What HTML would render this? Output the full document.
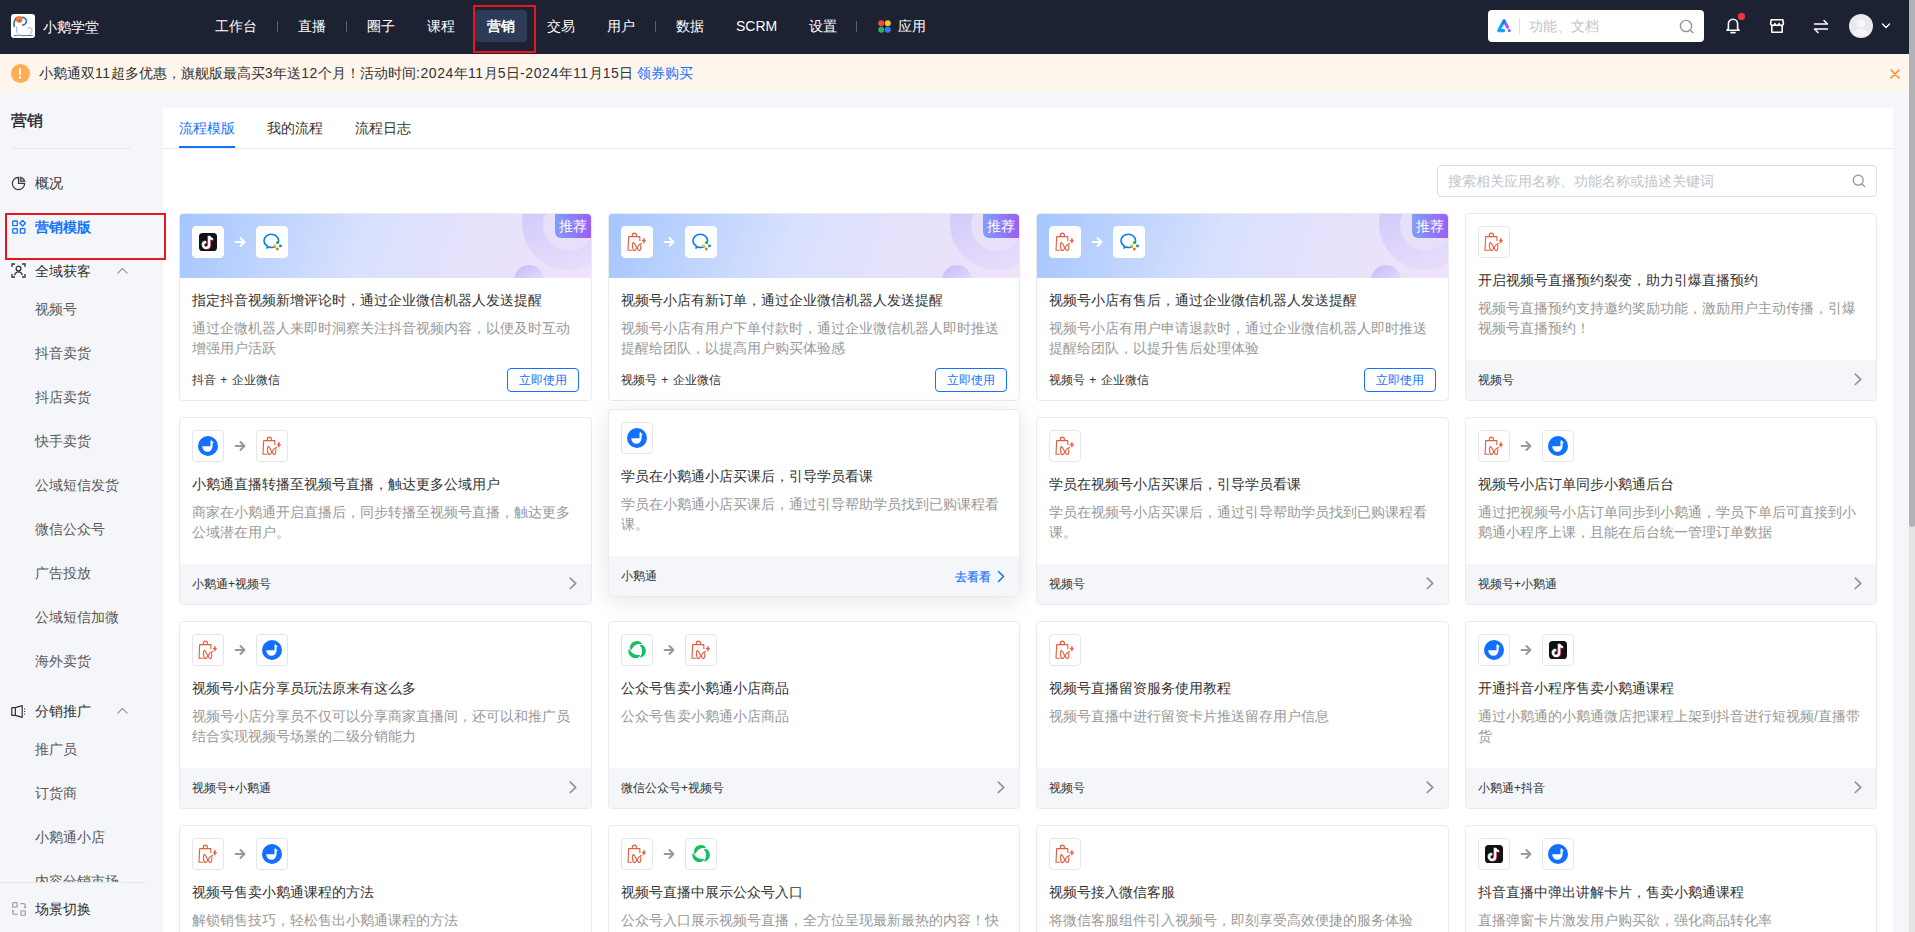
<!DOCTYPE html>
<html><head><meta charset="utf-8"><title>营销</title>
<style>
*{box-sizing:border-box}
html,body{margin:0;padding:0}
body{width:1915px;height:932px;overflow:hidden;position:relative;background:#f4f6fa;font-family:"Liberation Sans",sans-serif;color:#333;font-size:14px}
.top{position:absolute;left:0;top:0;width:1915px;height:54px;background:#1c2232}
.logo{position:absolute;left:11px;top:14px;width:24px;height:24px;border-radius:3px;background:#fff;overflow:hidden}
.brand{position:absolute;left:43px;top:17px;font-size:14px;line-height:20px;color:#fff;white-space:nowrap}
.nv{position:absolute;top:16px;font-size:14px;line-height:20px;color:#fff;white-space:nowrap}
.nv.act{font-weight:bold}
.actbg{position:absolute;left:475px;top:10px;width:52px;height:32px;border-radius:4px;background:#2c3b57}
.nsep{position:absolute;top:21px;width:1px;height:11px;background:#5a6070}
.redbox{position:absolute;border:2px solid #e3171d}
.sbox{position:absolute;left:1488px;top:10px;width:216px;height:32px;border-radius:4px;background:#fff}
.notice{position:absolute;left:0;top:54px;width:1915px;height:38px;background:#fef6ec}
.ntxt{position:absolute;left:39px;top:9px;font-size:14px;line-height:20px;color:#333;white-space:nowrap}
.dg{letter-spacing:.6px}
.ntxt a{color:#1472ff;text-decoration:none}
.side{position:absolute;left:0;top:92px;width:163px;height:840px}
.stitle{position:absolute;left:11px;top:18px;font-size:16px;line-height:22px;color:#1f2329;-webkit-text-stroke:.35px #1f2329}
.sdiv{position:absolute;left:11px;top:56px;width:120px;height:1px;background:#e5e7eb}
.si{position:absolute;left:35px;font-size:14px;line-height:20px;color:#595959;white-space:nowrap}
.sg{position:absolute;left:35px;font-size:14px;line-height:20px;color:#333;white-space:nowrap}
.panel{position:absolute;left:163px;top:108px;width:1730px;height:824px;background:#fff}
.tab{position:absolute;top:10px;font-size:14px;line-height:20px;color:#333;white-space:nowrap}
.tab.on{color:#1472ff}
.tabline{position:absolute;left:0;top:40px;width:1730px;height:1px;background:#ebedf0}
.tabul{position:absolute;left:16px;top:38px;width:56px;height:2px;background:#1472ff}
.search{position:absolute;left:1274px;top:57px;width:440px;height:32px;border:1px solid #dcdfe6;border-radius:4px}
.search span{position:absolute;left:10px;top:5px;font-size:14px;line-height:20px;color:#c0c4cc;white-space:nowrap}
.card{position:absolute;width:412px;height:188px;border:1px solid #ebebeb;border-radius:4px;background:#fff;overflow:hidden}
.card.hov{box-shadow:0 4px 24px rgba(0,0,0,.1)}
.hdr{position:absolute;left:0;top:0;right:0;height:64px;overflow:hidden;background:linear-gradient(110deg,#a4c6ff 0%,#d9e1fd 45%,#e6e1fb 70%,#efe3fa 100%)}
.ring{position:absolute;right:-25px;top:-38px;width:94px;height:94px;border-radius:50%;background:linear-gradient(160deg,rgba(196,186,252,.75) 10%,rgba(205,196,250,.45) 60%,rgba(220,210,250,.2) 100%)}
.ring::after{content:"";position:absolute;left:21px;top:23px;width:52px;height:52px;border-radius:50%;background:#e7e0fa}
.dot{position:absolute;right:47px;top:51px;width:30px;height:30px;border-radius:50%;background:linear-gradient(150deg,#cfc2fb 20%,rgba(235,225,250,0) 80%)}
.badge{position:absolute;right:0;top:0;width:36px;height:24px;border-radius:0 4px 0 6px;background:linear-gradient(90deg,#7f9ff8,#9b5ef6);color:#fff;font-size:14px;line-height:24px;text-align:center}
.icons{position:absolute;left:12px;top:12px;height:32px;display:flex;align-items:center}
.ib{width:32px;height:32px;border:1px solid #e6e6e6;border-radius:4px;background:#fff;display:flex;align-items:center;justify-content:center}
.ib.nb{border-color:#fff}
.ib svg{display:block}
.arr{width:32px;display:flex;align-items:center;justify-content:center}
.arr svg{display:block}
.ttl{position:absolute;left:12px;top:56px;font-size:14px;line-height:20px;color:#333;white-space:nowrap}
.desc{position:absolute;left:12px;top:84px;font-size:14px;line-height:20px;color:#999;white-space:nowrap}
.card .hdr ~ .ttl{top:76px}
.card .hdr ~ .desc{top:104px}
.ft{position:absolute;left:0;bottom:0;right:0;height:40px;background:#f5f6fa}
.ftt{position:absolute;left:12px;top:12px;font-size:12px;line-height:17px;color:#333;white-space:nowrap}
.chev{position:absolute;right:14px;top:13px}
.chev svg,.go svg{display:block}
.go svg{margin-top:-2px}
.go{position:absolute;right:14px;top:13px;font-size:12px;line-height:17px;color:#1472ff;display:flex;align-items:center;gap:6px;-webkit-text-stroke:.2px #1472ff}
.ftw{position:absolute;left:12px;top:158px;font-size:12px;line-height:17px;color:#333;white-space:nowrap;word-spacing:1px}
.btn{position:absolute;right:12px;top:154px;width:72px;height:24px;border:1px solid #1472ff;border-radius:4px;color:#1472ff;font-size:12px;line-height:22px;text-align:center}
.sbar{position:absolute;left:1909px;top:0;width:6px;height:932px;background:#e4e4e5}
.sthumb{position:absolute;left:1909px;top:0;width:6px;height:527px;background:#b1b2b5;border-radius:0 0 3px 3px}
</style></head><body>
<div class="top">
  <div class="logo"><svg width="24" height="24" viewBox="0 0 24 24"><path d="M3.2 12.2C2.6 9.6 3 6.5 5.6 3.6M11.5 3.2C13.6 3.8 15.4 5.2 15.4 7.5 15.4 9.5 13.2 11 11.6 11" fill="none" stroke="#2f6db0" stroke-width="1.6" stroke-linecap="round"/><circle cx="8.2" cy="5.4" r="3.3" fill="#f47a3a"/><circle cx="8.6" cy="7" r="1" fill="#a05a3a"/><path d="M5.8 12.5V18.8M16.6 14.4C18.4 13.2 21 13.6 21 16.4 20.8 18.2 19.8 19.6 18.6 20.8" fill="none" stroke="#7ea3c6" stroke-width=".9"/><path d="M3 21.6H21.8" stroke="#4d7aa0" stroke-width="1"/><rect x="5.4" y="19.8" width="4.6" height="1.6" fill="#f6d2c8"/></svg></div>
  <div class="brand">小鹅学堂</div>
  <div class="actbg"></div>
  <div class="nv" style="left:215px">工作台</div>
<div class="nv" style="left:298px">直播</div>
<div class="nv" style="left:367px">圈子</div>
<div class="nv" style="left:427px">课程</div>
<div class="nv act" style="left:487px">营销</div>
<div class="nv" style="left:547px">交易</div>
<div class="nv" style="left:607px">用户</div>
<div class="nv" style="left:676px">数据</div>
<div class="nv" style="left:736px">SCRM</div>
<div class="nv" style="left:809px">设置</div>
<div class="nv" style="left:898px">应用</div><div class="nsep" style="left:277px"></div><div class="nsep" style="left:346px"></div><div class="nsep" style="left:655px"></div><div class="nsep" style="left:856px"></div>
  <div class="redbox" style="left:473px;top:5px;width:63px;height:48px"></div>
  <div style="position:absolute;left:878px;top:20px;width:13px;height:13px">
    <svg width="13" height="13" viewBox="0 0 13 13"><circle cx="3.2" cy="3.2" r="3" fill="#f5483b"/><circle cx="9.8" cy="3.2" r="3" fill="#fbbf24"/><circle cx="3.2" cy="9.8" r="3" fill="#22b35e"/><circle cx="9.8" cy="9.8" r="3" fill="#2f7bf5"/></svg>
  </div>
  <div class="sbox">
    <svg style="position:absolute;left:0;top:0" width="32" height="32" viewBox="0 0 32 32"><defs><linearGradient id="lg1" x1="0" y1="1" x2="1" y2="0"><stop offset="0" stop-color="#06b6f8"/><stop offset="1" stop-color="#0a7cff"/></linearGradient></defs><path d="M19.6 17.2L16.2 11" stroke="#8e62ff" stroke-width="3.1" stroke-linecap="round" fill="none"/><path d="M16.1 10.8L10.6 20.6H15.6" stroke="url(#lg1)" stroke-width="3.1" stroke-linecap="round" stroke-linejoin="round" fill="none"/><circle cx="21.3" cy="20.6" r="1.6" fill="#8e5cff"/></svg>
    <div style="position:absolute;left:31px;top:8px;width:1px;height:16px;background:#dcdfe6"></div>
    <div style="position:absolute;left:41px;top:6px;font-size:14px;line-height:20px;color:#c0c4cc;white-space:nowrap">功能、文档</div>
    <svg style="position:absolute;left:191px;top:9px" width="16" height="15" viewBox="0 0 16 15" fill="none" stroke="#909399" stroke-width="1.4" stroke-linecap="round"><circle cx="7" cy="7" r="5.6"/><path d="M11.2 11.2L14 13.8"/></svg>
  </div>
  <svg style="position:absolute;left:1725px;top:17px" width="16" height="17" viewBox="0 0 16 17" fill="none" stroke="#fff" stroke-width="1.6" stroke-linejoin="round"><path d="M8 2.2a4.6 4.6 0 0 0-4.6 4.6v4.6L2 13.2h12l-1.4-1.8V6.8A4.6 4.6 0 0 0 8 2.2z"/><path d="M6 15.6h4" stroke-linecap="round"/></svg>
  <div style="position:absolute;left:1738px;top:13px;width:6.5px;height:6.5px;border-radius:50%;background:#f5353b"></div>
  <svg style="position:absolute;left:1769px;top:18px" width="16" height="16" viewBox="0 0 16 16" fill="none" stroke="#fff" stroke-width="1.6" stroke-linejoin="round"><path d="M2.2 1.8h11.6l.6 3.6c0 1.3-1 2-2.2 2-1.1 0-2.1-.8-2.1-1.9 0 1.1-1 1.9-2.1 1.9s-2.1-.8-2.1-1.9c0 1.1-1 1.9-2.1 1.9-1.2 0-2.2-.7-2.2-2z"/><path d="M2.8 8v6.2h10.4V8M2.4 14.2h11.2"/></svg>
  <svg style="position:absolute;left:1813px;top:19px" width="16" height="15" viewBox="0 0 16 15" fill="none" stroke="#fff" stroke-width="1.6" stroke-linecap="round" stroke-linejoin="round"><path d="M1.5 5h13L11 1.5M14.5 10h-13L5 13.5"/></svg>
  <div style="position:absolute;left:1849px;top:14px;width:24px;height:24px;border-radius:50%;background:#e9eaf0;overflow:hidden"><svg width="24" height="24" viewBox="0 0 24 24"><circle cx="12" cy="9.5" r="4.2" fill="#f7f7fa"/><path d="M4 22c1-5 4.5-7 8-7s7 2 8 7z" fill="#f7f7fa"/></svg></div>
  <svg style="position:absolute;left:1881px;top:22px" width="10" height="8" viewBox="0 0 10 8" fill="none" stroke="#fff" stroke-width="1.4" stroke-linecap="round" stroke-linejoin="round"><path d="M1.5 2l3.5 3.5L8.5 2"/></svg>
</div>
<div class="notice">
  <div style="position:absolute;left:11px;top:10px;width:19px;height:19px;border-radius:50%;background:#ffae52"><div style="position:absolute;left:8.3px;top:4px;width:2.2px;height:7px;background:#fff;border-radius:1px"></div><div style="position:absolute;left:8.3px;top:12.4px;width:2.2px;height:2.2px;background:#fff;border-radius:1px"></div></div>
  <div class="ntxt">小鹅通双<span class="dg">11</span>超多优惠，旗舰版最高买<span class="dg">3</span>年送<span class="dg">12</span>个月！活动时间<span class="dg">:2024</span>年<span class="dg">11</span>月<span class="dg">5</span>日<span class="dg">-2024</span>年<span class="dg">11</span>月<span class="dg">15</span>日 <a>领券购买</a></div>
  <svg style="position:absolute;left:1890px;top:15px" width="10" height="10" viewBox="0 0 10 10" stroke="#ff8a1f" stroke-width="1.5" stroke-linecap="round"><path d="M1 1l8 8M9 1L1 9"/></svg>
</div>
<div class="side">
  <div class="stitle">营销</div>
  <div class="sdiv"></div>
  <svg style="position:absolute;left:11px;top:84px" width="15" height="15" viewBox="0 0 15 15" fill="none" stroke="#333" stroke-width="1.2"><path d="M7.5 1.4a6.1 6.1 0 1 0 6.1 6.1H7.5z"/><path d="M9.4 1.2v4.4h4.4A6.1 6.1 0 0 0 9.4 1.2z" fill="#999" stroke="#555"/></svg>
  <div class="sg" style="top:81px">概况</div>
  <svg style="position:absolute;left:12px;top:128px" width="14" height="14" viewBox="0 0 14 14" fill="none" stroke="#1472ff" stroke-width="1.3" stroke-linejoin="round"><rect x=".7" y="1" width="4.6" height="4.6" rx=".6"/><path d="M10.6 .4L13.4 3.2 10.6 6 7.8 3.2Z"/><rect x=".7" y="8.6" width="4.6" height="4.6" rx=".6"/><rect x="8.3" y="8.6" width="4.6" height="4.6" rx=".6"/></svg>
  <div class="sg" style="top:125px;color:#1472ff;font-weight:bold">营销模版</div>
  <svg style="position:absolute;left:11px;top:171px" width="15" height="15" viewBox="0 0 15 15" fill="none" stroke="#333" stroke-width="1.3"><path d="M1 4V1h3M11 1h3v3M14 11v3h-3M4 14H1v-3"/><circle cx="7.5" cy="5.6" r="2.4"/><path d="M3.6 12.2c.6-2.2 2-3.4 3.9-3.4s3.3 1.2 3.9 3.4"/></svg>
  <div class="sg" style="top:169px">全域获客</div>
  <svg style="position:absolute;left:117px;top:175px" width="11" height="7" viewBox="0 0 11 7" fill="none" stroke="#999" stroke-width="1.2" stroke-linecap="round"><path d="M1 6l4.5-4.5L10 6"/></svg>
  <svg style="position:absolute;left:11px;top:613px" width="15" height="13" viewBox="0 0 15 13" fill="none" stroke="#333" stroke-width="1.2" stroke-linejoin="round"><path d="M.8 2.6H4.4V10.4H.8z"/><path d="M4.4 2.6L11.2 .7V12.3L4.4 10.4"/><path d="M13.6 3.6v1M13.6 6v1M13.6 8.4v1" stroke-width="1.1"/></svg>
  <div class="sg" style="top:609px">分销推广</div>
  <svg style="position:absolute;left:117px;top:615px" width="11" height="7" viewBox="0 0 11 7" fill="none" stroke="#999" stroke-width="1.2" stroke-linecap="round"><path d="M1 6l4.5-4.5L10 6"/></svg>
  <div class="si" style="top:207px">视频号</div>
<div class="si" style="top:251px">抖音卖货</div>
<div class="si" style="top:295px">抖店卖货</div>
<div class="si" style="top:339px">快手卖货</div>
<div class="si" style="top:383px">公域短信发货</div>
<div class="si" style="top:427px">微信公众号</div>
<div class="si" style="top:471px">广告投放</div>
<div class="si" style="top:515px">公域短信加微</div>
<div class="si" style="top:559px">海外卖货</div>
<div class="si" style="top:647px">推广员</div>
<div class="si" style="top:691px">订货商</div>
<div class="si" style="top:735px">小鹅通小店</div>
<div class="si" style="top:779px">内容分销市场</div>
  <div style="position:absolute;left:0;top:790px;width:163px;height:50px;background:#f4f6fa"></div>
  <div style="position:absolute;left:0;top:790px;width:146px;height:1px;background:#e5e7eb"></div>
  <svg style="position:absolute;left:12px;top:810px" width="14" height="14" viewBox="0 0 14 14" fill="none" stroke="#a6a6a6" stroke-width="1.3" stroke-linejoin="round"><rect x=".7" y=".7" width="4.4" height="4.4" rx=".5"/><rect x="8.9" y="8.9" width="4.4" height="4.4" rx=".5"/><path d="M8.2 1.6h3.4c.9 0 1.6.7 1.6 1.6v2.6M12 4.6l1.2 1.2 1.2-1.2"/><path d="M5.8 12.4H2.4c-.9 0-1.6-.7-1.6-1.6V8.2M2 9.4L.8 8.2-.4 9.4"/></svg>
  <div class="sg" style="top:807px">场景切换</div>
</div>
<div class="panel">
  <div class="tab on" style="left:16px">流程模版</div>
  <div class="tab" style="left:104px">我的流程</div>
  <div class="tab" style="left:192px">流程日志</div>
  <div class="tabline"></div>
  <div class="tabul"></div>
  <div class="search"><span>搜索相关应用名称、功能名称或描述关键词</span><svg style="position:absolute;left:414px;top:8px" width="14" height="14" viewBox="0 0 14 14" fill="none" stroke="#909399" stroke-width="1.2" stroke-linecap="round"><circle cx="6.2" cy="6.2" r="5"/><path d="M10 10l2.6 2.6"/></svg></div>
</div>
<div class="card" style="left:179px;top:213px;width:413px"><div class="hdr"><div class="ring"></div><div class="dot"></div><div class="badge">推荐</div></div><div class="icons"><span class="ib nb"><svg width="18" height="18" viewBox="0 0 18 18"><rect x="0" y="0" width="18" height="18" rx="3.6" fill="#111"/>
<g fill="none">
<path d="M9.6 2.7V11.5A3.05 3.05 0 1 1 6.55 8.45" stroke="#25f4ee" stroke-width="2.1"/>
<path d="M9.7 2.9Q10.4 5.3 13.3 5.7" stroke="#25f4ee" stroke-width="2"/>
<path d="M10.8 3.7V12.5A3.05 3.05 0 1 1 7.75 9.45" stroke="#fe2c55" stroke-width="2.1"/>
<path d="M10.9 3.9Q11.6 6.3 14.5 6.7" stroke="#fe2c55" stroke-width="2"/>
<path d="M10.2 3.2V12A3.05 3.05 0 1 1 7.15 8.95" stroke="#fff" stroke-width="2.1"/>
<path d="M10.3 3.4Q11 5.8 13.9 6.2" stroke="#fff" stroke-width="2"/>
</g></svg></span><span class="arr"><svg width="12" height="12" viewBox="0 0 12 12" fill="none" stroke="#fff" stroke-width="2" stroke-linecap="round" stroke-linejoin="round"><path d="M1.6 6H10.2M6.5 2L10.4 6 6.5 10"/></svg></span><span class="ib nb"><svg width="22" height="22" viewBox="0 0 22 22"><path d="M14.6 15.6c-1 .5-2.3.8-3.7.8-1 0-2-.2-2.9-.5L6 17.1l.4-2C4.3 13.9 3 12 3 9.8 3 6 6.4 3.2 10.3 3.2s7.3 2.8 7.3 6.6c0 .8-.1 1.6-.5 2.3" fill="none" stroke="#0b7df5" stroke-width="1.55" stroke-linejoin="round" stroke-linecap="round"/>
<path d="M16.4 11.4L13 14.9 16.3 18.4 19.8 14.9Z" fill="none" stroke="#8fcf8f" stroke-width=".5"/>
<ellipse cx="16.4" cy="11.6" rx="1.3" ry="1.5" fill="#27b03c"/><ellipse cx="13.2" cy="14.9" rx="1.5" ry="1.3" fill="#ffc400"/><ellipse cx="16.3" cy="18.1" rx="1.3" ry="1.5" fill="#f96a00"/><ellipse cx="19.5" cy="14.9" rx="1.5" ry="1.3" fill="#1585f0"/></svg></span></div><div class="ttl">指定抖音视频新增评论时，通过企业微信机器人发送提醒</div><div class="desc">通过企微机器人来即时洞察关注抖音视频内容，以便及时互动<br>增强用户活跃</div><div class="ftw">抖音 + 企业微信</div><div class="btn">立即使用</div></div>
<div class="card" style="left:608px;top:213px;width:412px"><div class="hdr"><div class="ring"></div><div class="dot"></div><div class="badge">推荐</div></div><div class="icons"><span class="ib nb"><svg width="22" height="22" viewBox="0 0 22 22" fill="none" stroke="#e85a3c" stroke-width="1.1" stroke-linecap="round" stroke-linejoin="round"><path d="M6.3 5.5V4.2a2.05 2.05 0 0 1 4.1 0V5.5"/><path d="M13.9 9.8L13.8 5.6H2.7L2 19.3H5.8"/><path d="M7.4 11.4C5.6 12.5 6.6 19.6 8.4 19.6 9.6 19.6 10.4 17.8 10.9 16.9 9.9 14.8 8.6 12.4 7.4 11.4Z"/><path d="M10.9 16.9C11.5 18 12.2 19.6 13.2 19.6 14.6 19.6 15 16 14.7 13.9"/><path d="M10.9 16.9C12 14.6 13.6 12.8 15.6 12.2"/><path d="M17.9 7.3Q18.2 9.4 19.8 9.8 18.2 10.2 17.9 12.3 17.6 10.2 16 9.8 17.6 9.4 17.9 7.3Z" fill="#e85a3c" stroke-width=".6"/></svg></span><span class="arr"><svg width="12" height="12" viewBox="0 0 12 12" fill="none" stroke="#fff" stroke-width="2" stroke-linecap="round" stroke-linejoin="round"><path d="M1.6 6H10.2M6.5 2L10.4 6 6.5 10"/></svg></span><span class="ib nb"><svg width="22" height="22" viewBox="0 0 22 22"><path d="M14.6 15.6c-1 .5-2.3.8-3.7.8-1 0-2-.2-2.9-.5L6 17.1l.4-2C4.3 13.9 3 12 3 9.8 3 6 6.4 3.2 10.3 3.2s7.3 2.8 7.3 6.6c0 .8-.1 1.6-.5 2.3" fill="none" stroke="#0b7df5" stroke-width="1.55" stroke-linejoin="round" stroke-linecap="round"/>
<path d="M16.4 11.4L13 14.9 16.3 18.4 19.8 14.9Z" fill="none" stroke="#8fcf8f" stroke-width=".5"/>
<ellipse cx="16.4" cy="11.6" rx="1.3" ry="1.5" fill="#27b03c"/><ellipse cx="13.2" cy="14.9" rx="1.5" ry="1.3" fill="#ffc400"/><ellipse cx="16.3" cy="18.1" rx="1.3" ry="1.5" fill="#f96a00"/><ellipse cx="19.5" cy="14.9" rx="1.5" ry="1.3" fill="#1585f0"/></svg></span></div><div class="ttl">视频号小店有新订单，通过企业微信机器人发送提醒</div><div class="desc">视频号小店有用户下单付款时，通过企业微信机器人即时推送<br>提醒给团队，以提高用户购买体验感</div><div class="ftw">视频号 + 企业微信</div><div class="btn">立即使用</div></div>
<div class="card" style="left:1036px;top:213px;width:413px"><div class="hdr"><div class="ring"></div><div class="dot"></div><div class="badge">推荐</div></div><div class="icons"><span class="ib nb"><svg width="22" height="22" viewBox="0 0 22 22" fill="none" stroke="#e85a3c" stroke-width="1.1" stroke-linecap="round" stroke-linejoin="round"><path d="M6.3 5.5V4.2a2.05 2.05 0 0 1 4.1 0V5.5"/><path d="M13.9 9.8L13.8 5.6H2.7L2 19.3H5.8"/><path d="M7.4 11.4C5.6 12.5 6.6 19.6 8.4 19.6 9.6 19.6 10.4 17.8 10.9 16.9 9.9 14.8 8.6 12.4 7.4 11.4Z"/><path d="M10.9 16.9C11.5 18 12.2 19.6 13.2 19.6 14.6 19.6 15 16 14.7 13.9"/><path d="M10.9 16.9C12 14.6 13.6 12.8 15.6 12.2"/><path d="M17.9 7.3Q18.2 9.4 19.8 9.8 18.2 10.2 17.9 12.3 17.6 10.2 16 9.8 17.6 9.4 17.9 7.3Z" fill="#e85a3c" stroke-width=".6"/></svg></span><span class="arr"><svg width="12" height="12" viewBox="0 0 12 12" fill="none" stroke="#fff" stroke-width="2" stroke-linecap="round" stroke-linejoin="round"><path d="M1.6 6H10.2M6.5 2L10.4 6 6.5 10"/></svg></span><span class="ib nb"><svg width="22" height="22" viewBox="0 0 22 22"><path d="M14.6 15.6c-1 .5-2.3.8-3.7.8-1 0-2-.2-2.9-.5L6 17.1l.4-2C4.3 13.9 3 12 3 9.8 3 6 6.4 3.2 10.3 3.2s7.3 2.8 7.3 6.6c0 .8-.1 1.6-.5 2.3" fill="none" stroke="#0b7df5" stroke-width="1.55" stroke-linejoin="round" stroke-linecap="round"/>
<path d="M16.4 11.4L13 14.9 16.3 18.4 19.8 14.9Z" fill="none" stroke="#8fcf8f" stroke-width=".5"/>
<ellipse cx="16.4" cy="11.6" rx="1.3" ry="1.5" fill="#27b03c"/><ellipse cx="13.2" cy="14.9" rx="1.5" ry="1.3" fill="#ffc400"/><ellipse cx="16.3" cy="18.1" rx="1.3" ry="1.5" fill="#f96a00"/><ellipse cx="19.5" cy="14.9" rx="1.5" ry="1.3" fill="#1585f0"/></svg></span></div><div class="ttl">视频号小店有售后，通过企业微信机器人发送提醒</div><div class="desc">视频号小店有用户申请退款时，通过企业微信机器人即时推送<br>提醒给团队，以提升售后处理体验</div><div class="ftw">视频号 + 企业微信</div><div class="btn">立即使用</div></div>
<div class="card" style="left:1465px;top:213px;width:412px"><div class="icons"><span class="ib"><svg width="22" height="22" viewBox="0 0 22 22" fill="none" stroke="#e85a3c" stroke-width="1.1" stroke-linecap="round" stroke-linejoin="round"><path d="M6.3 5.5V4.2a2.05 2.05 0 0 1 4.1 0V5.5"/><path d="M13.9 9.8L13.8 5.6H2.7L2 19.3H5.8"/><path d="M7.4 11.4C5.6 12.5 6.6 19.6 8.4 19.6 9.6 19.6 10.4 17.8 10.9 16.9 9.9 14.8 8.6 12.4 7.4 11.4Z"/><path d="M10.9 16.9C11.5 18 12.2 19.6 13.2 19.6 14.6 19.6 15 16 14.7 13.9"/><path d="M10.9 16.9C12 14.6 13.6 12.8 15.6 12.2"/><path d="M17.9 7.3Q18.2 9.4 19.8 9.8 18.2 10.2 17.9 12.3 17.6 10.2 16 9.8 17.6 9.4 17.9 7.3Z" fill="#e85a3c" stroke-width=".6"/></svg></span></div><div class="ttl">开启视频号直播预约裂变，助力引爆直播预约</div><div class="desc">视频号直播预约支持邀约奖励功能，激励用户主动传播，引爆<br>视频号直播预约！</div><div class="ft"><span class="ftt">视频号</span><span class="chev"><svg width="8" height="13" viewBox="0 0 8 13" fill="none" stroke="#939393" stroke-width="1.7" stroke-linecap="round" stroke-linejoin="round"><path d="M1.3 1.2L6.7 6.3 1.3 11.5"/></svg></span></div></div>
<div class="card" style="left:179px;top:417px;width:413px"><div class="icons"><span class="ib"><svg width="20" height="20" viewBox="0 0 20 20"><circle cx="10" cy="10" r="10" fill="#1170ff"/><path d="M4.2 10.2H12.5V5.6C12.5 4.8 13.1 4.3 13.8 4.3L14.4 5.4 16 6.6 14.6 6.9V10.3A5.2 5.6 0 0 1 4.2 10.2Z" fill="#fff"/></svg></span><span class="arr"><svg width="12" height="12" viewBox="0 0 12 12" fill="none" stroke="#999" stroke-width="2" stroke-linecap="round" stroke-linejoin="round"><path d="M1.6 6H10.2M6.5 2L10.4 6 6.5 10"/></svg></span><span class="ib"><svg width="22" height="22" viewBox="0 0 22 22" fill="none" stroke="#e85a3c" stroke-width="1.1" stroke-linecap="round" stroke-linejoin="round"><path d="M6.3 5.5V4.2a2.05 2.05 0 0 1 4.1 0V5.5"/><path d="M13.9 9.8L13.8 5.6H2.7L2 19.3H5.8"/><path d="M7.4 11.4C5.6 12.5 6.6 19.6 8.4 19.6 9.6 19.6 10.4 17.8 10.9 16.9 9.9 14.8 8.6 12.4 7.4 11.4Z"/><path d="M10.9 16.9C11.5 18 12.2 19.6 13.2 19.6 14.6 19.6 15 16 14.7 13.9"/><path d="M10.9 16.9C12 14.6 13.6 12.8 15.6 12.2"/><path d="M17.9 7.3Q18.2 9.4 19.8 9.8 18.2 10.2 17.9 12.3 17.6 10.2 16 9.8 17.6 9.4 17.9 7.3Z" fill="#e85a3c" stroke-width=".6"/></svg></span></div><div class="ttl">小鹅通直播转播至视频号直播，触达更多公域用户</div><div class="desc">商家在小鹅通开启直播后，同步转播至视频号直播，触达更多<br>公域潜在用户。</div><div class="ft"><span class="ftt">小鹅通+视频号</span><span class="chev"><svg width="8" height="13" viewBox="0 0 8 13" fill="none" stroke="#939393" stroke-width="1.7" stroke-linecap="round" stroke-linejoin="round"><path d="M1.3 1.2L6.7 6.3 1.3 11.5"/></svg></span></div></div>
<div class="card hov" style="left:608px;top:409px;width:412px"><div class="icons"><span class="ib"><svg width="20" height="20" viewBox="0 0 20 20"><circle cx="10" cy="10" r="10" fill="#1170ff"/><path d="M4.2 10.2H12.5V5.6C12.5 4.8 13.1 4.3 13.8 4.3L14.4 5.4 16 6.6 14.6 6.9V10.3A5.2 5.6 0 0 1 4.2 10.2Z" fill="#fff"/></svg></span></div><div class="ttl">学员在小鹅通小店买课后，引导学员看课</div><div class="desc">学员在小鹅通小店买课后，通过引导帮助学员找到已购课程看<br>课。</div><div class="ft"><span class="ftt">小鹅通</span><span class="go">去看看<svg width="8" height="13" viewBox="0 0 8 13" fill="none" stroke="#1472ff" stroke-width="1.5" stroke-linecap="round" stroke-linejoin="round"><path d="M1.5 1.5L6.5 6.5 1.5 11.5"/></svg></span></div></div>
<div class="card" style="left:1036px;top:417px;width:413px"><div class="icons"><span class="ib"><svg width="22" height="22" viewBox="0 0 22 22" fill="none" stroke="#e85a3c" stroke-width="1.1" stroke-linecap="round" stroke-linejoin="round"><path d="M6.3 5.5V4.2a2.05 2.05 0 0 1 4.1 0V5.5"/><path d="M13.9 9.8L13.8 5.6H2.7L2 19.3H5.8"/><path d="M7.4 11.4C5.6 12.5 6.6 19.6 8.4 19.6 9.6 19.6 10.4 17.8 10.9 16.9 9.9 14.8 8.6 12.4 7.4 11.4Z"/><path d="M10.9 16.9C11.5 18 12.2 19.6 13.2 19.6 14.6 19.6 15 16 14.7 13.9"/><path d="M10.9 16.9C12 14.6 13.6 12.8 15.6 12.2"/><path d="M17.9 7.3Q18.2 9.4 19.8 9.8 18.2 10.2 17.9 12.3 17.6 10.2 16 9.8 17.6 9.4 17.9 7.3Z" fill="#e85a3c" stroke-width=".6"/></svg></span></div><div class="ttl">学员在视频号小店买课后，引导学员看课</div><div class="desc">学员在视频号小店买课后，通过引导帮助学员找到已购课程看<br>课。</div><div class="ft"><span class="ftt">视频号</span><span class="chev"><svg width="8" height="13" viewBox="0 0 8 13" fill="none" stroke="#939393" stroke-width="1.7" stroke-linecap="round" stroke-linejoin="round"><path d="M1.3 1.2L6.7 6.3 1.3 11.5"/></svg></span></div></div>
<div class="card" style="left:1465px;top:417px;width:412px"><div class="icons"><span class="ib"><svg width="22" height="22" viewBox="0 0 22 22" fill="none" stroke="#e85a3c" stroke-width="1.1" stroke-linecap="round" stroke-linejoin="round"><path d="M6.3 5.5V4.2a2.05 2.05 0 0 1 4.1 0V5.5"/><path d="M13.9 9.8L13.8 5.6H2.7L2 19.3H5.8"/><path d="M7.4 11.4C5.6 12.5 6.6 19.6 8.4 19.6 9.6 19.6 10.4 17.8 10.9 16.9 9.9 14.8 8.6 12.4 7.4 11.4Z"/><path d="M10.9 16.9C11.5 18 12.2 19.6 13.2 19.6 14.6 19.6 15 16 14.7 13.9"/><path d="M10.9 16.9C12 14.6 13.6 12.8 15.6 12.2"/><path d="M17.9 7.3Q18.2 9.4 19.8 9.8 18.2 10.2 17.9 12.3 17.6 10.2 16 9.8 17.6 9.4 17.9 7.3Z" fill="#e85a3c" stroke-width=".6"/></svg></span><span class="arr"><svg width="12" height="12" viewBox="0 0 12 12" fill="none" stroke="#999" stroke-width="2" stroke-linecap="round" stroke-linejoin="round"><path d="M1.6 6H10.2M6.5 2L10.4 6 6.5 10"/></svg></span><span class="ib"><svg width="20" height="20" viewBox="0 0 20 20"><circle cx="10" cy="10" r="10" fill="#1170ff"/><path d="M4.2 10.2H12.5V5.6C12.5 4.8 13.1 4.3 13.8 4.3L14.4 5.4 16 6.6 14.6 6.9V10.3A5.2 5.6 0 0 1 4.2 10.2Z" fill="#fff"/></svg></span></div><div class="ttl">视频号小店订单同步小鹅通后台</div><div class="desc">通过把视频号小店订单同步到小鹅通，学员下单后可直接到小<br>鹅通小程序上课，且能在后台统一管理订单数据</div><div class="ft"><span class="ftt">视频号+小鹅通</span><span class="chev"><svg width="8" height="13" viewBox="0 0 8 13" fill="none" stroke="#939393" stroke-width="1.7" stroke-linecap="round" stroke-linejoin="round"><path d="M1.3 1.2L6.7 6.3 1.3 11.5"/></svg></span></div></div>
<div class="card" style="left:179px;top:621px;width:413px"><div class="icons"><span class="ib"><svg width="22" height="22" viewBox="0 0 22 22" fill="none" stroke="#e85a3c" stroke-width="1.1" stroke-linecap="round" stroke-linejoin="round"><path d="M6.3 5.5V4.2a2.05 2.05 0 0 1 4.1 0V5.5"/><path d="M13.9 9.8L13.8 5.6H2.7L2 19.3H5.8"/><path d="M7.4 11.4C5.6 12.5 6.6 19.6 8.4 19.6 9.6 19.6 10.4 17.8 10.9 16.9 9.9 14.8 8.6 12.4 7.4 11.4Z"/><path d="M10.9 16.9C11.5 18 12.2 19.6 13.2 19.6 14.6 19.6 15 16 14.7 13.9"/><path d="M10.9 16.9C12 14.6 13.6 12.8 15.6 12.2"/><path d="M17.9 7.3Q18.2 9.4 19.8 9.8 18.2 10.2 17.9 12.3 17.6 10.2 16 9.8 17.6 9.4 17.9 7.3Z" fill="#e85a3c" stroke-width=".6"/></svg></span><span class="arr"><svg width="12" height="12" viewBox="0 0 12 12" fill="none" stroke="#999" stroke-width="2" stroke-linecap="round" stroke-linejoin="round"><path d="M1.6 6H10.2M6.5 2L10.4 6 6.5 10"/></svg></span><span class="ib"><svg width="20" height="20" viewBox="0 0 20 20"><circle cx="10" cy="10" r="10" fill="#1170ff"/><path d="M4.2 10.2H12.5V5.6C12.5 4.8 13.1 4.3 13.8 4.3L14.4 5.4 16 6.6 14.6 6.9V10.3A5.2 5.6 0 0 1 4.2 10.2Z" fill="#fff"/></svg></span></div><div class="ttl">视频号小店分享员玩法原来有这么多</div><div class="desc">视频号小店分享员不仅可以分享商家直播间，还可以和推广员<br>结合实现视频号场景的二级分销能力</div><div class="ft"><span class="ftt">视频号+小鹅通</span><span class="chev"><svg width="8" height="13" viewBox="0 0 8 13" fill="none" stroke="#939393" stroke-width="1.7" stroke-linecap="round" stroke-linejoin="round"><path d="M1.3 1.2L6.7 6.3 1.3 11.5"/></svg></span></div></div>
<div class="card" style="left:608px;top:621px;width:412px"><div class="icons"><span class="ib"><svg width="20" height="20" viewBox="0 0 20 20" fill="#12c15e"><path d="M4.10 10.00 3.49 9.39 3.21 8.72 3.06 8.01 3.03 7.28 3.09 6.53 3.26 5.79 3.53 5.07 3.89 4.37 4.34 3.71 4.87 3.11 5.47 2.56 6.14 2.09 6.87 1.70 7.64 1.39 8.44 1.17 9.27 1.05 10.10 1.03 10.93 1.11 11.75 1.28 12.53 1.55 13.27 1.92 13.94 2.38 14.52 2.95 14.86 3.77 14.86 3.77 13.92 3.89 13.16 3.88 12.47 3.90 11.81 3.95 11.19 4.05 10.61 4.18 10.07 4.34 9.55 4.53 9.07 4.74 8.62 4.98 8.20 5.23 7.81 5.51 7.44 5.79 7.09 6.09 6.76 6.40 6.45 6.73 6.16 7.07 5.88 7.43 5.62 7.80 5.36 8.19 5.11 8.60 4.87 9.03 4.60 9.50 4.10 10.00Z"/><path d="M12.95 4.89 13.78 4.66 14.50 4.76 15.19 4.99 15.85 5.32 16.46 5.75 17.01 6.27 17.51 6.86 17.93 7.52 18.28 8.24 18.54 9.00 18.70 9.80 18.78 10.61 18.76 11.44 18.64 12.26 18.42 13.07 18.11 13.84 17.72 14.58 17.24 15.26 16.68 15.87 16.05 16.42 15.37 16.87 14.63 17.22 13.85 17.44 12.96 17.32 12.96 17.32 13.33 16.45 13.72 15.80 14.05 15.19 14.33 14.59 14.56 14.01 14.74 13.44 14.87 12.89 14.96 12.35 15.02 11.83 15.04 11.32 15.03 10.83 14.99 10.35 14.93 9.89 14.84 9.43 14.73 8.99 14.60 8.56 14.46 8.14 14.29 7.72 14.10 7.30 13.89 6.89 13.66 6.47 13.40 6.04 13.14 5.58 12.95 4.89Z"/><path d="M12.95 15.11 12.73 15.95 12.29 16.52 11.75 17.00 11.13 17.40 10.45 17.71 9.72 17.94 8.96 18.07 8.18 18.11 7.39 18.05 6.60 17.89 5.82 17.64 5.08 17.30 4.38 16.86 3.72 16.35 3.13 15.76 2.62 15.11 2.18 14.39 1.83 13.64 1.57 12.85 1.42 12.03 1.37 11.21 1.43 10.40 1.63 9.61 2.18 8.90 2.18 8.90 2.75 9.66 3.12 10.32 3.48 10.92 3.86 11.46 4.25 11.94 4.65 12.38 5.06 12.77 5.48 13.12 5.91 13.43 6.34 13.70 6.77 13.94 7.20 14.15 7.64 14.32 8.07 14.47 8.50 14.60 8.94 14.71 9.38 14.79 9.83 14.85 10.29 14.90 10.75 14.92 11.23 14.93 11.73 14.93 12.26 14.93 12.95 15.11Z"/></svg></span><span class="arr"><svg width="12" height="12" viewBox="0 0 12 12" fill="none" stroke="#999" stroke-width="2" stroke-linecap="round" stroke-linejoin="round"><path d="M1.6 6H10.2M6.5 2L10.4 6 6.5 10"/></svg></span><span class="ib"><svg width="22" height="22" viewBox="0 0 22 22" fill="none" stroke="#e85a3c" stroke-width="1.1" stroke-linecap="round" stroke-linejoin="round"><path d="M6.3 5.5V4.2a2.05 2.05 0 0 1 4.1 0V5.5"/><path d="M13.9 9.8L13.8 5.6H2.7L2 19.3H5.8"/><path d="M7.4 11.4C5.6 12.5 6.6 19.6 8.4 19.6 9.6 19.6 10.4 17.8 10.9 16.9 9.9 14.8 8.6 12.4 7.4 11.4Z"/><path d="M10.9 16.9C11.5 18 12.2 19.6 13.2 19.6 14.6 19.6 15 16 14.7 13.9"/><path d="M10.9 16.9C12 14.6 13.6 12.8 15.6 12.2"/><path d="M17.9 7.3Q18.2 9.4 19.8 9.8 18.2 10.2 17.9 12.3 17.6 10.2 16 9.8 17.6 9.4 17.9 7.3Z" fill="#e85a3c" stroke-width=".6"/></svg></span></div><div class="ttl">公众号售卖小鹅通小店商品</div><div class="desc">公众号售卖小鹅通小店商品</div><div class="ft"><span class="ftt">微信公众号+视频号</span><span class="chev"><svg width="8" height="13" viewBox="0 0 8 13" fill="none" stroke="#939393" stroke-width="1.7" stroke-linecap="round" stroke-linejoin="round"><path d="M1.3 1.2L6.7 6.3 1.3 11.5"/></svg></span></div></div>
<div class="card" style="left:1036px;top:621px;width:413px"><div class="icons"><span class="ib"><svg width="22" height="22" viewBox="0 0 22 22" fill="none" stroke="#e85a3c" stroke-width="1.1" stroke-linecap="round" stroke-linejoin="round"><path d="M6.3 5.5V4.2a2.05 2.05 0 0 1 4.1 0V5.5"/><path d="M13.9 9.8L13.8 5.6H2.7L2 19.3H5.8"/><path d="M7.4 11.4C5.6 12.5 6.6 19.6 8.4 19.6 9.6 19.6 10.4 17.8 10.9 16.9 9.9 14.8 8.6 12.4 7.4 11.4Z"/><path d="M10.9 16.9C11.5 18 12.2 19.6 13.2 19.6 14.6 19.6 15 16 14.7 13.9"/><path d="M10.9 16.9C12 14.6 13.6 12.8 15.6 12.2"/><path d="M17.9 7.3Q18.2 9.4 19.8 9.8 18.2 10.2 17.9 12.3 17.6 10.2 16 9.8 17.6 9.4 17.9 7.3Z" fill="#e85a3c" stroke-width=".6"/></svg></span></div><div class="ttl">视频号直播留资服务使用教程</div><div class="desc">视频号直播中进行留资卡片推送留存用户信息</div><div class="ft"><span class="ftt">视频号</span><span class="chev"><svg width="8" height="13" viewBox="0 0 8 13" fill="none" stroke="#939393" stroke-width="1.7" stroke-linecap="round" stroke-linejoin="round"><path d="M1.3 1.2L6.7 6.3 1.3 11.5"/></svg></span></div></div>
<div class="card" style="left:1465px;top:621px;width:412px"><div class="icons"><span class="ib"><svg width="20" height="20" viewBox="0 0 20 20"><circle cx="10" cy="10" r="10" fill="#1170ff"/><path d="M4.2 10.2H12.5V5.6C12.5 4.8 13.1 4.3 13.8 4.3L14.4 5.4 16 6.6 14.6 6.9V10.3A5.2 5.6 0 0 1 4.2 10.2Z" fill="#fff"/></svg></span><span class="arr"><svg width="12" height="12" viewBox="0 0 12 12" fill="none" stroke="#999" stroke-width="2" stroke-linecap="round" stroke-linejoin="round"><path d="M1.6 6H10.2M6.5 2L10.4 6 6.5 10"/></svg></span><span class="ib"><svg width="18" height="18" viewBox="0 0 18 18"><rect x="0" y="0" width="18" height="18" rx="3.6" fill="#111"/>
<g fill="none">
<path d="M9.6 2.7V11.5A3.05 3.05 0 1 1 6.55 8.45" stroke="#25f4ee" stroke-width="2.1"/>
<path d="M9.7 2.9Q10.4 5.3 13.3 5.7" stroke="#25f4ee" stroke-width="2"/>
<path d="M10.8 3.7V12.5A3.05 3.05 0 1 1 7.75 9.45" stroke="#fe2c55" stroke-width="2.1"/>
<path d="M10.9 3.9Q11.6 6.3 14.5 6.7" stroke="#fe2c55" stroke-width="2"/>
<path d="M10.2 3.2V12A3.05 3.05 0 1 1 7.15 8.95" stroke="#fff" stroke-width="2.1"/>
<path d="M10.3 3.4Q11 5.8 13.9 6.2" stroke="#fff" stroke-width="2"/>
</g></svg></span></div><div class="ttl">开通抖音小程序售卖小鹅通课程</div><div class="desc">通过小鹅通的小鹅通微店把课程上架到抖音进行短视频/直播带<br>货</div><div class="ft"><span class="ftt">小鹅通+抖音</span><span class="chev"><svg width="8" height="13" viewBox="0 0 8 13" fill="none" stroke="#939393" stroke-width="1.7" stroke-linecap="round" stroke-linejoin="round"><path d="M1.3 1.2L6.7 6.3 1.3 11.5"/></svg></span></div></div>
<div class="card" style="left:179px;top:825px;width:413px"><div class="icons"><span class="ib"><svg width="22" height="22" viewBox="0 0 22 22" fill="none" stroke="#e85a3c" stroke-width="1.1" stroke-linecap="round" stroke-linejoin="round"><path d="M6.3 5.5V4.2a2.05 2.05 0 0 1 4.1 0V5.5"/><path d="M13.9 9.8L13.8 5.6H2.7L2 19.3H5.8"/><path d="M7.4 11.4C5.6 12.5 6.6 19.6 8.4 19.6 9.6 19.6 10.4 17.8 10.9 16.9 9.9 14.8 8.6 12.4 7.4 11.4Z"/><path d="M10.9 16.9C11.5 18 12.2 19.6 13.2 19.6 14.6 19.6 15 16 14.7 13.9"/><path d="M10.9 16.9C12 14.6 13.6 12.8 15.6 12.2"/><path d="M17.9 7.3Q18.2 9.4 19.8 9.8 18.2 10.2 17.9 12.3 17.6 10.2 16 9.8 17.6 9.4 17.9 7.3Z" fill="#e85a3c" stroke-width=".6"/></svg></span><span class="arr"><svg width="12" height="12" viewBox="0 0 12 12" fill="none" stroke="#999" stroke-width="2" stroke-linecap="round" stroke-linejoin="round"><path d="M1.6 6H10.2M6.5 2L10.4 6 6.5 10"/></svg></span><span class="ib"><svg width="20" height="20" viewBox="0 0 20 20"><circle cx="10" cy="10" r="10" fill="#1170ff"/><path d="M4.2 10.2H12.5V5.6C12.5 4.8 13.1 4.3 13.8 4.3L14.4 5.4 16 6.6 14.6 6.9V10.3A5.2 5.6 0 0 1 4.2 10.2Z" fill="#fff"/></svg></span></div><div class="ttl">视频号售卖小鹅通课程的方法</div><div class="desc">解锁销售技巧，轻松售出小鹅通课程的方法</div><div class="ft"><span class="ftt">视频号+小鹅通</span><span class="chev"><svg width="8" height="13" viewBox="0 0 8 13" fill="none" stroke="#939393" stroke-width="1.7" stroke-linecap="round" stroke-linejoin="round"><path d="M1.3 1.2L6.7 6.3 1.3 11.5"/></svg></span></div></div>
<div class="card" style="left:608px;top:825px;width:412px"><div class="icons"><span class="ib"><svg width="22" height="22" viewBox="0 0 22 22" fill="none" stroke="#e85a3c" stroke-width="1.1" stroke-linecap="round" stroke-linejoin="round"><path d="M6.3 5.5V4.2a2.05 2.05 0 0 1 4.1 0V5.5"/><path d="M13.9 9.8L13.8 5.6H2.7L2 19.3H5.8"/><path d="M7.4 11.4C5.6 12.5 6.6 19.6 8.4 19.6 9.6 19.6 10.4 17.8 10.9 16.9 9.9 14.8 8.6 12.4 7.4 11.4Z"/><path d="M10.9 16.9C11.5 18 12.2 19.6 13.2 19.6 14.6 19.6 15 16 14.7 13.9"/><path d="M10.9 16.9C12 14.6 13.6 12.8 15.6 12.2"/><path d="M17.9 7.3Q18.2 9.4 19.8 9.8 18.2 10.2 17.9 12.3 17.6 10.2 16 9.8 17.6 9.4 17.9 7.3Z" fill="#e85a3c" stroke-width=".6"/></svg></span><span class="arr"><svg width="12" height="12" viewBox="0 0 12 12" fill="none" stroke="#999" stroke-width="2" stroke-linecap="round" stroke-linejoin="round"><path d="M1.6 6H10.2M6.5 2L10.4 6 6.5 10"/></svg></span><span class="ib"><svg width="20" height="20" viewBox="0 0 20 20" fill="#12c15e"><path d="M4.10 10.00 3.49 9.39 3.21 8.72 3.06 8.01 3.03 7.28 3.09 6.53 3.26 5.79 3.53 5.07 3.89 4.37 4.34 3.71 4.87 3.11 5.47 2.56 6.14 2.09 6.87 1.70 7.64 1.39 8.44 1.17 9.27 1.05 10.10 1.03 10.93 1.11 11.75 1.28 12.53 1.55 13.27 1.92 13.94 2.38 14.52 2.95 14.86 3.77 14.86 3.77 13.92 3.89 13.16 3.88 12.47 3.90 11.81 3.95 11.19 4.05 10.61 4.18 10.07 4.34 9.55 4.53 9.07 4.74 8.62 4.98 8.20 5.23 7.81 5.51 7.44 5.79 7.09 6.09 6.76 6.40 6.45 6.73 6.16 7.07 5.88 7.43 5.62 7.80 5.36 8.19 5.11 8.60 4.87 9.03 4.60 9.50 4.10 10.00Z"/><path d="M12.95 4.89 13.78 4.66 14.50 4.76 15.19 4.99 15.85 5.32 16.46 5.75 17.01 6.27 17.51 6.86 17.93 7.52 18.28 8.24 18.54 9.00 18.70 9.80 18.78 10.61 18.76 11.44 18.64 12.26 18.42 13.07 18.11 13.84 17.72 14.58 17.24 15.26 16.68 15.87 16.05 16.42 15.37 16.87 14.63 17.22 13.85 17.44 12.96 17.32 12.96 17.32 13.33 16.45 13.72 15.80 14.05 15.19 14.33 14.59 14.56 14.01 14.74 13.44 14.87 12.89 14.96 12.35 15.02 11.83 15.04 11.32 15.03 10.83 14.99 10.35 14.93 9.89 14.84 9.43 14.73 8.99 14.60 8.56 14.46 8.14 14.29 7.72 14.10 7.30 13.89 6.89 13.66 6.47 13.40 6.04 13.14 5.58 12.95 4.89Z"/><path d="M12.95 15.11 12.73 15.95 12.29 16.52 11.75 17.00 11.13 17.40 10.45 17.71 9.72 17.94 8.96 18.07 8.18 18.11 7.39 18.05 6.60 17.89 5.82 17.64 5.08 17.30 4.38 16.86 3.72 16.35 3.13 15.76 2.62 15.11 2.18 14.39 1.83 13.64 1.57 12.85 1.42 12.03 1.37 11.21 1.43 10.40 1.63 9.61 2.18 8.90 2.18 8.90 2.75 9.66 3.12 10.32 3.48 10.92 3.86 11.46 4.25 11.94 4.65 12.38 5.06 12.77 5.48 13.12 5.91 13.43 6.34 13.70 6.77 13.94 7.20 14.15 7.64 14.32 8.07 14.47 8.50 14.60 8.94 14.71 9.38 14.79 9.83 14.85 10.29 14.90 10.75 14.92 11.23 14.93 11.73 14.93 12.26 14.93 12.95 15.11Z"/></svg></span></div><div class="ttl">视频号直播中展示公众号入口</div><div class="desc">公众号入口展示视频号直播，全方位呈现最新最热的内容！快</div><div class="ft"><span class="ftt">微信公众号+视频号</span><span class="chev"><svg width="8" height="13" viewBox="0 0 8 13" fill="none" stroke="#939393" stroke-width="1.7" stroke-linecap="round" stroke-linejoin="round"><path d="M1.3 1.2L6.7 6.3 1.3 11.5"/></svg></span></div></div>
<div class="card" style="left:1036px;top:825px;width:413px"><div class="icons"><span class="ib"><svg width="22" height="22" viewBox="0 0 22 22" fill="none" stroke="#e85a3c" stroke-width="1.1" stroke-linecap="round" stroke-linejoin="round"><path d="M6.3 5.5V4.2a2.05 2.05 0 0 1 4.1 0V5.5"/><path d="M13.9 9.8L13.8 5.6H2.7L2 19.3H5.8"/><path d="M7.4 11.4C5.6 12.5 6.6 19.6 8.4 19.6 9.6 19.6 10.4 17.8 10.9 16.9 9.9 14.8 8.6 12.4 7.4 11.4Z"/><path d="M10.9 16.9C11.5 18 12.2 19.6 13.2 19.6 14.6 19.6 15 16 14.7 13.9"/><path d="M10.9 16.9C12 14.6 13.6 12.8 15.6 12.2"/><path d="M17.9 7.3Q18.2 9.4 19.8 9.8 18.2 10.2 17.9 12.3 17.6 10.2 16 9.8 17.6 9.4 17.9 7.3Z" fill="#e85a3c" stroke-width=".6"/></svg></span></div><div class="ttl">视频号接入微信客服</div><div class="desc">将微信客服组件引入视频号，即刻享受高效便捷的服务体验</div><div class="ft"><span class="ftt">视频号</span><span class="chev"><svg width="8" height="13" viewBox="0 0 8 13" fill="none" stroke="#939393" stroke-width="1.7" stroke-linecap="round" stroke-linejoin="round"><path d="M1.3 1.2L6.7 6.3 1.3 11.5"/></svg></span></div></div>
<div class="card" style="left:1465px;top:825px;width:412px"><div class="icons"><span class="ib"><svg width="18" height="18" viewBox="0 0 18 18"><rect x="0" y="0" width="18" height="18" rx="3.6" fill="#111"/>
<g fill="none">
<path d="M9.6 2.7V11.5A3.05 3.05 0 1 1 6.55 8.45" stroke="#25f4ee" stroke-width="2.1"/>
<path d="M9.7 2.9Q10.4 5.3 13.3 5.7" stroke="#25f4ee" stroke-width="2"/>
<path d="M10.8 3.7V12.5A3.05 3.05 0 1 1 7.75 9.45" stroke="#fe2c55" stroke-width="2.1"/>
<path d="M10.9 3.9Q11.6 6.3 14.5 6.7" stroke="#fe2c55" stroke-width="2"/>
<path d="M10.2 3.2V12A3.05 3.05 0 1 1 7.15 8.95" stroke="#fff" stroke-width="2.1"/>
<path d="M10.3 3.4Q11 5.8 13.9 6.2" stroke="#fff" stroke-width="2"/>
</g></svg></span><span class="arr"><svg width="12" height="12" viewBox="0 0 12 12" fill="none" stroke="#999" stroke-width="2" stroke-linecap="round" stroke-linejoin="round"><path d="M1.6 6H10.2M6.5 2L10.4 6 6.5 10"/></svg></span><span class="ib"><svg width="20" height="20" viewBox="0 0 20 20"><circle cx="10" cy="10" r="10" fill="#1170ff"/><path d="M4.2 10.2H12.5V5.6C12.5 4.8 13.1 4.3 13.8 4.3L14.4 5.4 16 6.6 14.6 6.9V10.3A5.2 5.6 0 0 1 4.2 10.2Z" fill="#fff"/></svg></span></div><div class="ttl">抖音直播中弹出讲解卡片，售卖小鹅通课程</div><div class="desc">直播弹窗卡片激发用户购买欲，强化商品转化率</div><div class="ft"><span class="ftt">小鹅通+抖音</span><span class="chev"><svg width="8" height="13" viewBox="0 0 8 13" fill="none" stroke="#939393" stroke-width="1.7" stroke-linecap="round" stroke-linejoin="round"><path d="M1.3 1.2L6.7 6.3 1.3 11.5"/></svg></span></div></div>
<div class="redbox" style="left:5px;top:213px;width:161px;height:47px"></div>
<div class="sbar"></div>
<div class="sthumb"></div>
</body></html>
